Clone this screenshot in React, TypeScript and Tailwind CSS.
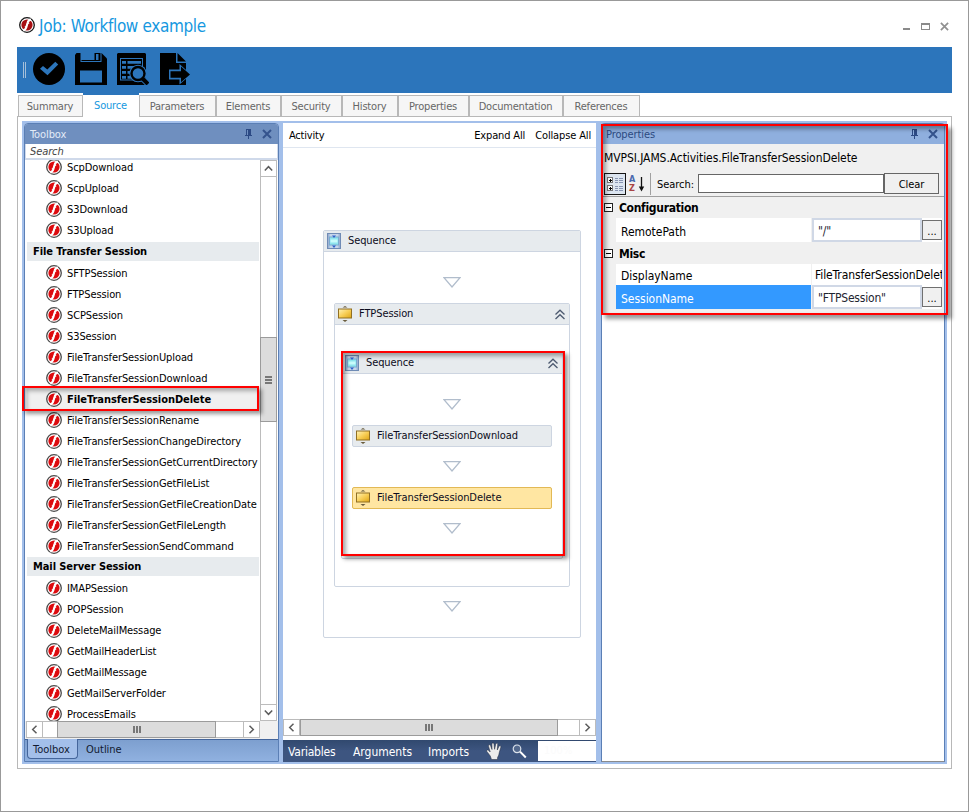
import type { ReactNode } from "react";

const topItems = ["ScpDownload", "ScpUpload", "S3Download", "S3Upload"];
const sessionItems = [
  "SFTPSession",
  "FTPSession",
  "SCPSession",
  "S3Session",
  "FileTransferSessionUpload",
  "FileTransferSessionDownload",
  "FileTransferSessionDelete",
  "FileTransferSessionRename",
  "FileTransferSessionChangeDirectory",
  "FileTransferSessionGetCurrentDirectory",
  "FileTransferSessionGetFileList",
  "FileTransferSessionGetFileCreationDate",
  "FileTransferSessionGetFileLength",
  "FileTransferSessionSendCommand",
];
const mailItems = [
  "IMAPSession",
  "POPSession",
  "DeleteMailMessage",
  "GetMailHeaderList",
  "GetMailMessage",
  "GetMailServerFolder",
  "ProcessEmails",
];

const tabs = [
  { label: "Summary", width: "w-[65px]" },
  { label: "Source", width: "w-[56px]", active: true },
  { label: "Parameters", width: "w-[77px]" },
  { label: "Elements", width: "w-[65px]" },
  { label: "Security", width: "w-[61px]" },
  { label: "History", width: "w-[56px]" },
  { label: "Properties", width: "w-[71px]" },
  { label: "Documentation", width: "w-[94px]" },
  { label: "References", width: "w-[77px]" },
];

function Logo({ dark = false }: { dark?: boolean }) {
  return (
    <svg className={`block size-4 shrink-0 ${dark ? "mt-[2px]" : ""}`} viewBox="0 0 16 16">
      <circle cx="8" cy="8" r="7.300" fill="#fff" stroke={dark ? "#151515" : "#4a4a4a"} strokeWidth="1.300" />
      <circle cx="8" cy="8" r="5.600" fill={dark ? "#a80e12" : "#dd0a0e"} />
      <path d="M12 2.600C9.700 2.800 9 4 8.500 6L7.400 10C6.900 11.900 6.200 13 4.200 13.400" fill="none" stroke="#fff" strokeWidth="2.100" />
      <path d="M8 6.200h2.200M5.800 9.800h2" stroke="#fff" strokeWidth="1.100" />
    </svg>
  );
}

function Pin() {
  return (
    <svg className="block h-[10px] w-[7px]" viewBox="0 0 7 10" shapeRendering="crispEdges">
      <path d="M1 0h5v1H1zM1 1h1v5H1zM3 1h3v5H3zM0 6h7v1H0zM3 7h1v3H3z" fill="#2c4a85" />
    </svg>
  );
}

function Cross({ className, color, width = 2 }: { className: string; color: string; width?: number }) {
  return (
    <svg className={className} viewBox="0 0 10 10">
      <path d="M1 1l8 8M9 1L1 9" stroke={color} strokeWidth={width} fill="none" />
    </svg>
  );
}

function Chevron({ d }: { d: string }) {
  return (
    <svg className="block size-[9px]" viewBox="0 0 9 9">
      <path d={d} fill="none" stroke="#5c5c5c" strokeWidth="1.500" />
    </svg>
  );
}
const LEFT = "M6.500 .8L2.700 4.500l3.800 3.700";
const RIGHT = "M2.500 .8l3.800 3.700-3.800 3.700";
const UP = "M.8 6.500L4.500 2.700l3.700 3.800";
const DOWN = "M.8 2.500l3.700 3.800 3.700-3.800";

function Header({ title, active = false }: { title: string; active?: boolean }) {
  return (
    <div className={`flex h-[20px] shrink-0 items-center rounded-t-[3px] pr-[6px] ${active ? "bg-[#6f8fbf] pl-[5px]" : "bg-[#8fafde] pl-[4px]"}`}>
      <span className={`grow pt-[2px] tracking-[-0.1px] ${active ? "text-[#e3ebf7]" : "text-[#2c4a80]"}`}>{title}</span>
      <Pin />
      <Cross className="ml-[10px] block size-[10px]" color="#34538d" />
    </div>
  );
}

function ToolItem({ label, selected = false }: { label: string; selected?: boolean }) {
  return (
    <div className={`flex h-[21px] shrink-0 items-center gap-[5px] pl-[19px] whitespace-nowrap ${selected ? "bg-[#f0f0f0] font-bold" : ""}`}>
      <Logo />
      <span className={`pt-[2px] ${selected ? "tracking-[-0.06px]" : "tracking-[-0.1px]"}`}>{label}</span>
    </div>
  );
}

function ToolGroup({ label }: { label: string }) {
  return (
    <div className="flex h-[21px] shrink-0 items-end pb-px">
      <div className="flex h-[19px] w-full items-center bg-[#e7ebee] pt-px pl-[6px] font-bold tracking-[-0.09px]">{label}</div>
    </div>
  );
}

function Triangle() {
  return (
    <svg className="block h-[12px] w-[18px] shrink-0" viewBox="0 0 18 12">
      <path d="M1 1.700h16L9 11Z" fill="#fff" stroke="#b1bdcc" strokeWidth="1.300" />
    </svg>
  );
}

function SequenceIcon() {
  return (
    <svg className="block h-[16px] w-[14px] shrink-0" viewBox="0 0 14 16">
      <rect x=".5" y=".5" width="13" height="15" fill="#c6d5ea" stroke="#6f8bb5" />
      <path d="M1 1h1.500v14H1zM11.500 1H13v14h-1.500z" fill="#9db3d5" />
      <rect x="2.500" y="4" width="9" height="8" fill="#8fe5ee" stroke="#79acd0" />
      <rect x="3.500" y="6.500" width="7" height="3" fill="#c8fbfb" />
      <path d="M5 2.500h4L7 5zM5 12.500h4L7 15z" fill="#2f62cc" />
    </svg>
  );
}

function ActivityIcon() {
  return (
    <svg className="-ml-px block h-[16px] w-[16px] shrink-0" viewBox="0 0 16 16">
      <defs>
        <linearGradient id="gold" x1="0" y1="0" x2="1" y2="1">
          <stop offset="0" stopColor="#fff3b8" />
          <stop offset=".5" stopColor="#f8cf58" />
          <stop offset="1" stopColor="#dda413" />
        </linearGradient>
      </defs>
      <path d="M5.500 1.500L8 0l2.500 1.500zM5.500 14L8 16l2.500-2z" fill="#695c3d" />
      <rect x="1.500" y="3" width="13" height="9" fill="url(#gold)" stroke="#917024" />
    </svg>
  );
}

function Collapse() {
  return (
    <svg className="block h-[11px] w-[12px]" viewBox="0 0 12 11">
      <path d="M1.500 5.500L6 1.200l4.500 4.300M1.500 10L6 5.700l4.500 4.300" fill="none" stroke="#4d5a70" strokeWidth="1.300" />
    </svg>
  );
}

function NodeHeader({ label, icon, collapsible = false }: { label: string; icon: ReactNode; collapsible?: boolean }) {
  return (
    <div className="flex h-[21px] shrink-0 items-center border-b border-[#cdd5e1] bg-[#e7ebee] pr-[3px] pl-[3px]">
      <span className="flex w-[21px]">{icon}</span>
      <span className="grow pb-[1px] tracking-[-0.1px] text-[#0c0c20]">{label}</span>
      {collapsible && <Collapse />}
    </div>
  );
}

function ActivityNode({ label, selected = false }: { label: string; selected?: boolean }) {
  return (
    <div className={`flex h-[22px] w-[200px] shrink-0 items-center rounded-[2px] border pl-[3px] ${selected ? "border-[#e2b955] bg-[#ffe6a2]" : "border-[#cdd5e1] bg-[#e7ebee]"}`}>
      <ActivityIcon />
      <span className="ml-[6px] tracking-[-0.08px] text-[#0c0c20]">{label}</span>
    </div>
  );
}

function HorizontalScroll({ before, thumb, after }: { before: string; thumb: string; after: string }) {
  return (
    <div className="flex h-[17px] shrink-0 border border-[#bcbcbc] bg-white">
      <div className="flex w-[16px] items-center justify-center border-r border-[#bcbcbc]">
        <Chevron d={LEFT} />
      </div>
      <div className={before} />
      <div className={`-my-px flex items-center justify-center gap-px border border-[#9b9b9b] bg-[#dcdcdc] ${thumb}`}>
        <i className="h-[7px] w-[2px] bg-[#777]" />
        <i className="h-[7px] w-[2px] bg-[#777]" />
        <i className="h-[7px] w-[2px] bg-[#777]" />
      </div>
      <div className={after} />
      <div className="flex w-[16px] items-center justify-center border-l border-[#bcbcbc]">
        <Chevron d={RIGHT} />
      </div>
    </div>
  );
}

function Toolbar() {
  return (
    <div className="mx-auto flex h-[46px] w-[935px] shrink-0 items-start bg-[#2c75bb] pt-[6px] pl-[6px]">
      <div className="mt-[9px] mr-[7px] h-[16px] w-[3px] border-x border-[#a5bfd9]" />
      <svg className="block size-8" viewBox="0 0 32 32">
        <circle cx="16" cy="16" r="16" />
        <path d="M7 15.800l3-2.800 4.300 3.600 8-7.800 2.900 2.700L14.500 22.300Z" fill="#2c75bb" />
      </svg>
      <svg className="ml-[10px] block size-8" viewBox="0 0 32 32">
        <path d="M0 2L1.500 0H26.500L32 5.500V32H0Z" />
        <path d="M5.500 0h1v8h19V0h1v9h-21z" fill="#2c75bb" />
        <path d="M6 0h13.500v7H6z" fill="#2c75bb" />
        <path d="M21 1h2.500v6H21z" fill="#2c75bb" />
        <path d="M5 17.500h22v12H5z" fill="#2c75bb" />
      </svg>
      <svg className="ml-[10px] block size-8" viewBox="0 0 32 32">
        <path d="M0 1L1 0h27l1 1v31H0Z" />
        <path d="M3 5h23v22.500H3z" fill="#2c75bb" />
        <path d="M4 6h21v20.500H4z" />
        <path d="M5 8h4v2.800H5zM10.500 8H24v2.800H10.500zM5 13h4v2.800H5zM10.500 13H24v2.800H10.500zM5 18h4v2.800H5zM10.500 18H16v2.800h-5.500zM5 23h4v2.800H5zM10.500 23H24v2.800H10.500z" fill="#2c75bb" />
        <circle cx="21" cy="20.500" r="8.700" fill="#2c75bb" />
        <path d="M26 26l5 5" stroke="#2c75bb" strokeWidth="6" />
        <circle cx="21" cy="20.500" r="6.500" fill="#2c75bb" stroke="#000" strokeWidth="2.400" />
        <path d="M25.500 25.500l5.500 5.500" stroke="#000" strokeWidth="4" />
      </svg>
      <svg className="ml-[11px] block size-8" viewBox="0 0 32 32">
        <path d="M0 0h16v10h10v22H0Z" />
        <path d="M17.500 0L26 8.500h-8.500Z" />
        <path d="M9 16.500h10.500v-5.500L31 21.500 19.500 31.500v-5H9Z" fill="#2c75bb" />
        <path d="M10.500 18.200H21V13.500l9 8-9 7.800V24.800H10.500Z" />
      </svg>
    </div>
  );
}

function Toolbox() {
  return (
    <div className="mt-[2px] ml-[2px] flex h-[639px] w-[255px] flex-col rounded-t-[4px] border border-[#5b7fb5] bg-[#cfd9ea]">
      <Header title="Toolbox" active />
      <div className="mx-[1px] flex h-[14px] shrink-0 items-center bg-white pt-[2px] pl-[4px] text-[11px] tracking-[-0.1px] text-[#444] italic">Search</div>
      <div className="mt-[2px] flex h-[561px] shrink-0 bg-white">
        <div className="flex w-[235px] flex-col overflow-hidden pr-[1px] pl-[2px]">
          <div className="-mt-[4px] flex flex-col">
            {topItems.map((t) => (
              <ToolItem key={t} label={t} />
            ))}
            <div className="h-px" />
            <ToolGroup label="File Transfer Session" />
            {sessionItems.map((t) => (
              <ToolItem key={t} label={t} selected={t === "FileTransferSessionDelete"} />
            ))}
            <ToolGroup label="Mail Server Session" />
            {mailItems.map((t) => (
              <ToolItem key={t} label={t} />
            ))}
          </div>
        </div>
        <div className="flex w-[17px] flex-col border border-[#bcbcbc]">
          <div className="flex h-[16px] items-center justify-center border-b border-[#bcbcbc]">
            <Chevron d={UP} />
          </div>
          <div className="h-[160px]" />
          <div className="-mx-px flex h-[85px] flex-col items-center justify-center gap-px border border-[#9b9b9b] bg-[#dcdcdc]">
            <i className="h-[2px] w-[7px] bg-[#777]" />
            <i className="h-[2px] w-[7px] bg-[#777]" />
            <i className="h-[2px] w-[7px] bg-[#777]" />
          </div>
          <div className="grow" />
          <div className="flex h-[16px] items-center justify-center border-t border-[#bcbcbc]">
            <Chevron d={DOWN} />
          </div>
        </div>
      </div>
      <div className="flex h-[18px] shrink-0 bg-[#f0f0f0] pl-[1px]">
        <div className="w-[234px]">
          <HorizontalScroll before="w-[14px]" thumb="w-[159px]" after="grow" />
        </div>
      </div>
      <div className="flex grow items-start border-t border-[#44659b] bg-gradient-to-b from-[#7d9fcf] to-[#90b1e0] pl-[2px] text-[#111a30]">
        <div className="-mt-px flex h-[20px] w-[51px] items-center rounded-b-[4px] border border-t-0 border-[#44659b] bg-[#a3bfea] pt-[2px] pl-[5px] tracking-[-0.02px]">Toolbox</div>
        <div className="ml-[8px] flex h-[19px] items-center tracking-[-0.02px]">Outline</div>
      </div>
    </div>
  );
}

function Designer() {
  return (
    <div className="mt-[2px] ml-[4px] flex h-[639px] w-[313px] flex-col bg-white">
      <div className="flex h-[25px] shrink-0 items-center border-b border-[#dfe6f0] pt-[2px] pr-[5px] pl-[6px] tracking-[-0.14px] text-black">
        <span className="grow tracking-[-0.2px]">Activity</span>
        <span>Expand All</span>
        <span className="ml-[10px]">Collapse All</span>
      </div>
      <div className="flex h-[571px] shrink-0 flex-col pt-[82px] pl-[40px]">
        <div className="flex h-[408px] w-[258px] flex-col overflow-hidden rounded-[2px] border border-[#cdd5e1]">
          <NodeHeader label="Sequence" icon={<SequenceIcon />} />
          <div className="flex flex-col items-center pt-[24px]">
            <Triangle />
            <div className="mt-[15px] flex h-[284px] w-[236px] flex-col rounded-[2px] border border-[#cdd5e1]">
              <NodeHeader label="FTPSession" icon={<ActivityIcon />} collapsible />
              <div className="flex flex-col items-center pt-[27px]">
                <div className="relative h-[207px] w-[222px]">
                  <div className="flex h-[207px] flex-col rounded-[2px] border border-[#cdd5e1]">
                    <NodeHeader label="Sequence" icon={<SequenceIcon />} collapsible />
                    <div className="flex flex-col items-center pt-[24px]">
                      <Triangle />
                      <div className="h-[15px]" />
                      <ActivityNode label="FileTransferSessionDownload" />
                      <div className="h-[13px]" />
                      <Triangle />
                      <div className="h-[15px]" />
                      <ActivityNode label="FileTransferSessionDelete" selected />
                      <div className="h-[13px]" />
                      <Triangle />
                    </div>
                  </div>
                  <div className="pointer-events-none absolute top-[-1px] left-0 h-[205px] w-[224px] border-2 border-[#ff0000] shadow-[3px_3px_4px_rgba(0,0,0,.4),inset_3px_3px_4px_rgba(0,0,0,.35)]" />
                </div>
              </div>
            </div>
            <div className="h-[13px]" />
            <Triangle />
          </div>
        </div>
      </div>
      <HorizontalScroll before="w-0" thumb="w-[258px]" after="grow" />
      <div className="mt-[4px] flex h-[22px] shrink-0 items-center bg-gradient-to-b from-[#31496f] via-[#3d5580] to-[#3d5580] pl-[5px] text-[12px] text-white">
        <span className="w-[65px] pt-[2px] tracking-[-0.2px]">Variables</span>
        <span className="w-[75px] pt-[2px] tracking-[-0.02px]">Arguments</span>
        <span className="w-[58px] pt-[2px] tracking-[-0.05px]">Imports</span>
        <svg className="block h-[18px] w-[16px]" viewBox="0 0 16 18">
          <path
            d="M5.500 17.500L4.300 14 .8 9.400C.2 8 1.700 7.400 2.700 8.400L4.200 10 2.500 4.200c-.4-1.500 1.500-2 2-.6L6 7.500 5.900 2c0-1.500 2-1.500 2.100 0L8.600 7.300 9.700 2.200c.4-1.400 2.200-1 2 .5L11.300 8l1.700-3.700c.7-1.200 2.200-.4 1.800 1l-1.600 5.500c-.2 2-.8 3.200-1.600 4.400l-.1 2.300Z"
            fill="#ececec"
            stroke="#222b3d"
            strokeWidth=".5"
          />
        </svg>
        <svg className="ml-[10px] block size-[15px]" viewBox="0 0 15 15">
          <circle cx="5" cy="4.800" r="3.800" fill="#53698d" stroke="#dce3ec" strokeWidth="1.200" />
          <path d="M8 7.600l5.800 5.900" stroke="#fff" strokeWidth="2" />
        </svg>
        <div className="ml-auto flex h-[20px] w-[58px] items-center bg-white pl-[6px] text-[11px] text-[#fbfbfb]">100%</div>
      </div>
    </div>
  );
}

function GroupRow({ label, height }: { label: string; height: string }) {
  return (
    <div className={`flex shrink-0 items-center bg-[#f0f0f0] pl-[2px] ${height}`}>
      <div className="flex size-[9px] items-center justify-center border border-[#222] bg-white">
        <i className="h-px w-[5px] bg-black" />
      </div>
      <span className="ml-[6px] pt-px text-[12px] font-bold tracking-[-0.31px]">{label}</span>
    </div>
  );
}

function PropRow({ name, height, selected = false, children }: { name: string; height: string; selected?: boolean; children: ReactNode }) {
  return (
    <div className={`flex shrink-0 pl-[14px] ${height}`}>
      <div className={`flex w-[195px] items-center pt-[3px] pl-[5px] text-[12px] tracking-[-0.03px] ${selected ? "bg-[#3399ff] text-white" : "bg-white text-black"}`}>{name}</div>
      <div className="ml-[1px] flex w-[130px] items-center overflow-hidden bg-white">{children}</div>
    </div>
  );
}

function ValueBox({ value }: { value: string }) {
  return (
    <>
      <div className="flex h-full w-[110px] shrink-0 items-center border-2 border-[#d0d8e6] pt-px pl-[4px] text-[12px] tracking-[-0.2px] text-[#1d2430]">{value}</div>
      <div className="flex h-[20px] w-[20px] shrink-0 items-center justify-center border border-[#707070] bg-[#f0f0f0] pt-[4px] text-[11px]">...</div>
    </>
  );
}

function Properties() {
  return (
    <div className="relative mt-[2px] ml-[5px] h-[639px] w-[344px]">
      <div className="flex h-[639px] flex-col rounded-t-[4px] border border-[#5b7fb5] border-b-[#8b8b8b] bg-white">
        <Header title="Properties" />
        <div className="flex h-[53px] shrink-0 flex-col border-b border-[#a0a0a0] bg-[#f0f0f0]">
          <div className="flex h-[28px] items-center pl-[2px] text-[12px] tracking-[-0.08px]">MVPSI.JAMS.Activities.FileTransferSessionDelete</div>
          <div className="flex h-[23px] items-center pl-[2px]">
            <div className="flex h-[22px] w-[22px] items-center justify-center border border-[#151515] bg-[#dce5f0]">
              <svg className="block size-[16px]" viewBox="0 0 16 16" shapeRendering="crispEdges">
                <path d="M.5 1.500h5v5h-5zM.5 9.500h5v5h-5z" fill="#fff" stroke="#777" />
                <path d="M2 4h3M3.500 2.500v3M2 12h3M3.500 10.500v3" stroke="#000" />
                <path d="M8 2.500h3M12 2.500h4M8 4.500h3M12 4.500h4M8 6.500h3M12 6.500h4M8 10.500h3M12 10.500h4M8 12.500h3M12 12.500h4M8 14.500h3M12 14.500h4" stroke="#8794b2" />
              </svg>
            </div>
            <div className="ml-[3px] flex w-[9px] flex-col text-[9px] leading-[9px] font-bold">
              <span className="text-[#4a69ad]">A</span>
              <span className="text-[#a84444]">Z</span>
            </div>
            <svg className="block h-[16px] w-[7px]" viewBox="0 0 7 16">
              <path d="M3.500 1v11" stroke="#111" strokeWidth="1.300" />
              <path d="M.8 10.500h5.400L3.500 15.500Z" fill="#111" />
            </svg>
            <div className="ml-[5px] h-[22px] w-px bg-[#a0a0a0]" />
            <span className="ml-[6px] w-[41px] pt-[2px] tracking-[-0.04px]">Search:</span>
            <div className="h-[19px] w-[186px] border border-[#666] bg-white" />
            <div className="flex h-[21px] w-[55px] items-center justify-center border border-[#666] bg-[#f0f0f0] pt-[2px] tracking-[-0.1px]">Clear</div>
          </div>
        </div>
        <div className="flex h-[117px] flex-col bg-[#f0f0f0]">
          <GroupRow label="Configuration" height="h-[21px]" />
          <PropRow name="RemotePath" height="h-[24px]">
            <ValueBox value={'"/"'} />
          </PropRow>
          <GroupRow label="Misc" height="h-[22px]" />
          <PropRow name="DisplayName" height="h-[21px]">
            <span className="pl-[3px] text-[12px] tracking-[-0.1px]">FileTransferSessionDelete</span>
          </PropRow>
          <PropRow name="SessionName" height="h-[24px]" selected>
            <ValueBox value={'"FTPSession"'} />
          </PropRow>
        </div>
      </div>
      <div className="pointer-events-none absolute top-[1px] left-0 h-[191px] w-[347px] border-2 border-[#ff0000] shadow-[4px_4px_4px_rgba(0,0,0,.4),inset_3px_3px_4px_rgba(0,0,0,.35)]" />
    </div>
  );
}

export default function App() {
  return (
    <div className="flex h-[812px] w-[969px] flex-col border border-[#999] bg-white font-['DejaVu_Sans_Condensed','DejaVu_Sans',sans-serif] text-[11px] leading-[14px] whitespace-nowrap text-black">
      <div className="flex h-[46px] shrink-0 items-center pr-[19px] pl-[18px]">
        <Logo dark />
        <h1 className="ml-[4px] grow pt-[4px] text-[17px] leading-[20px] tracking-[-0.36px] text-[#1698e0]">Job: Workflow example</h1>
        <div className="mt-[9px] h-[2px] w-[7px] bg-[#8a8a8a]" />
        <div className="mt-[4px] ml-[11px] h-[7px] w-[9px] border border-t-2 border-[#8a8a8a]" />
        <Cross className="mt-[4px] ml-[10px] block size-[9px]" color="#909090" width={1.9} />
      </div>
      <Toolbar />
      <div className="mx-auto flex h-[24px] w-[935px] shrink-0 items-end pl-[1px]">
        {tabs.map((t) =>
          t.active ? (
            <div key={t.label} className={`relative z-10 flex h-[24px] shrink-0 items-center justify-center border-t-2 border-[#2c75bb] bg-white pr-px tracking-[-0.2px] text-[#1698e0] ${t.width}`}>
              {t.label}
            </div>
          ) : (
            <div key={t.label} className={`flex h-[22px] shrink-0 items-center justify-center border border-b-0 border-[#b8b8b8] bg-[#f6f6f6] pr-px tracking-[-0.2px] text-[#666] ${t.width}`}>
              {t.label}
            </div>
          ),
        )}
      </div>
      <div className="mx-auto -mt-px flex h-[653px] w-[935px] shrink-0 border border-[#b8b8b8] pt-[4px] pl-[4px]">
        <div className="flex h-[643px] w-[925px] bg-[#a3bfea]">
          <Toolbox />
          <Designer />
          <Properties />
        </div>
      </div>
      <div className="pointer-events-none absolute top-[386px] left-[22px] h-[25px] w-[237px] border-2 border-[#ff0000] shadow-[3px_3px_4px_rgba(0,0,0,.4),inset_3px_3px_4px_rgba(0,0,0,.3)]" />
    </div>
  );
}
